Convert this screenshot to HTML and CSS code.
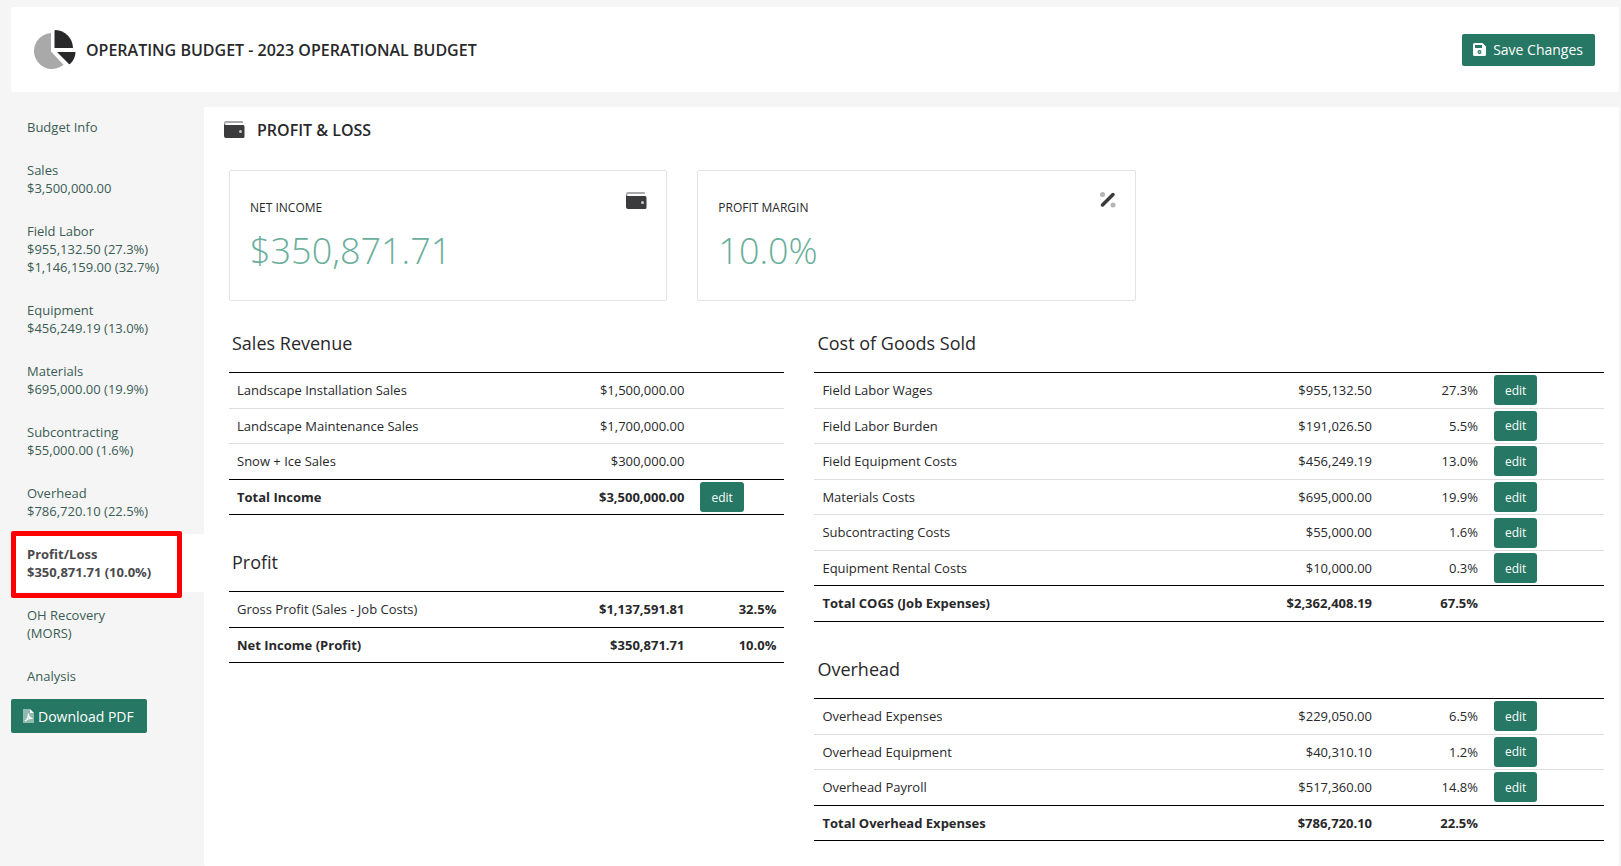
FILE: index.html
```
<!DOCTYPE html>
<html lang="en">
<head>
  <meta charset="UTF-8">
  <meta name="viewport" content="width=device-width, initial-scale=1.0">
  <title>Operating Budget - 2023 Operational Budget</title>
  <link rel="stylesheet" href="styles.css">
</head>
<body>

<!-- shared icons -->
<svg class="sprite" aria-hidden="true">
  <symbol id="wallet" viewBox="0 0 21 18">
    <path fill="#a9a9a9" d="M2 0h16a1 1 0 0 1 1 1v1H2.500A1.500 1.500 0 0 0 1 3.500L0 4V2a2 2 0 0 1 2-2z"/>
    <path fill="#3b3b3e" d="M0 3l1.500 1H19a1.500 1.500 0 0 1 1.500 1.500v10A1.500 1.500 0 0 1 19 17H2a2 2 0 0 1-2-2z"/>
    <circle cx="16.500" cy="10.500" r="1.500" fill="#c8c8c8"/>
  </symbol>
</svg>

<header class="page-header">
  <svg class="pie" width="42" height="40" viewBox="0 0 42 40" aria-hidden="true">
    <path fill="#a9a9a9" d="M17 3v18.500L29.500 34.800A18 18 0 1 1 17 3z"/>
    <path fill="#28282b" d="M21.500 0A18.500 18.500 0 0 1 39 18H20.500V1a1 1 0 0 1 1-1z"/>
    <path fill="#28282b" d="M23 22h18a1 1 0 0 1 .5 1 17 17 0 0 1-5.500 11 1 1 0 0 1-1 0z"/>
  </svg>
  <h1>OPERATING BUDGET - 2023 OPERATIONAL BUDGET</h1>
  <button class="btn btn-save" type="button">
    <svg width="13" height="13" viewBox="0 0 13 13" aria-hidden="true">
      <path fill="#fff" fill-rule="evenodd" d="M1.500 0H9.500L13 3.500v8A1.500 1.500 0 0 1 11.500 13h-10A1.500 1.500 0 0 1 0 11.500v-10A1.500 1.500 0 0 1 1.500 0zM2 2v3h7V2zM6.500 7a2 2 0 1 0 0 4 2 2 0 0 0 0-4z"/>
      <circle cx="6.500" cy="9" r="1" fill="#9cc5b9"/>
    </svg>
    Save Changes
  </button>
</header>

<div class="layout">
  <nav class="sidebar">
    <a href="#">Budget Info</a>
    <a href="#">Sales<br>$3,500,000.00</a>
    <a href="#">Field Labor<br>$955,132.50 (27.3%)<br>$1,146,159.00 (32.7%)</a>
    <a href="#">Equipment<br>$456,249.19 (13.0%)</a>
    <a href="#">Materials<br>$695,000.00 (19.9%)</a>
    <a href="#">Subcontracting<br>$55,000.00 (1.6%)</a>
    <a href="#">Overhead<br>$786,720.10 (22.5%)</a>
    <a href="#" class="active">Profit/Loss<br>$350,871.71 (10.0%)</a>
    <a href="#">OH Recovery<br>(MORS)</a>
    <a href="#">Analysis</a>
    <button class="btn btn-download" type="button">
      <svg width="11" height="14" viewBox="0 0 11 14" aria-hidden="true">
        <path fill="#8fbcae" d="M0 0h7v4h4v10H0z"/>
        <path fill="#fff" d="M7 0l4 4H7z"/>
        <path fill="none" stroke="#fff" stroke-width="1.200" d="M2 12c2-1 3.500-4 3.500-7.500C5.500 7.500 7 9.500 9.500 9.500 6.500 9 4 10 2 12"/>
      </svg>
      Download PDF
    </button>
  </nav>

  <main class="content">
    <h2 class="content-title">
      <svg width="21" height="18" aria-hidden="true"><use href="#wallet"/></svg>
      PROFIT &amp; LOSS
    </h2>

    <div class="grid">
      <div class="card">
        <div class="card-label">NET INCOME</div>
        <div class="card-value">$350,871.71</div>
        <svg class="card-icon" width="21" height="18" aria-hidden="true"><use href="#wallet"/></svg>
      </div>
      <div class="card">
        <div class="card-label">PROFIT MARGIN</div>
        <div class="card-value">10.0%</div>
        <svg class="card-icon" width="16" height="16" viewBox="0 0 16 16" aria-hidden="true">
          <circle cx="2.500" cy="2.500" r="2.500" fill="#b5b5b5"/>
          <circle cx="13" cy="13" r="2.500" fill="#b5b5b5"/>
          <path d="M2.500 13L13 2.500" stroke="#3b3b3e" stroke-width="3.500" stroke-linecap="round"/>
        </svg>
      </div>

      <div class="col-left">
        <section>
          <h3>Sales Revenue</h3>
          <table>
            <colgroup><col><col class="w-amount"><col class="w-side"></colgroup>
            <tbody>
              <tr><td>Landscape Installation Sales</td><td class="num">$1,500,000.00</td><td></td></tr>
              <tr><td>Landscape Maintenance Sales</td><td class="num">$1,700,000.00</td><td></td></tr>
              <tr><td>Snow + Ice Sales</td><td class="num">$300,000.00</td><td></td></tr>
              <tr class="total"><td>Total Income</td><td class="num">$3,500,000.00</td><td class="action"><button class="btn btn-edit" type="button">edit</button></td></tr>
            </tbody>
          </table>
        </section>
        <section>
          <h3>Profit</h3>
          <table>
            <colgroup><col><col class="w-amount"><col class="w-side"></colgroup>
            <tbody>
              <tr><td>Gross Profit (Sales - Job Costs)</td><td class="num strong">$1,137,591.81</td><td class="num strong">32.5%</td></tr>
              <tr class="total"><td>Net Income (Profit)</td><td class="num">$350,871.71</td><td class="num">10.0%</td></tr>
            </tbody>
          </table>
        </section>
      </div>

      <div class="col-right">
        <section>
          <h3>Cost of Goods Sold</h3>
          <table>
            <colgroup><col><col class="w-amount"><col class="w-percent"><col class="w-edit"></colgroup>
            <tbody>
              <tr><td>Field Labor Wages</td><td class="num">$955,132.50</td><td class="num">27.3%</td><td class="action"><button class="btn btn-edit" type="button">edit</button></td></tr>
              <tr><td>Field Labor Burden</td><td class="num">$191,026.50</td><td class="num">5.5%</td><td class="action"><button class="btn btn-edit" type="button">edit</button></td></tr>
              <tr><td>Field Equipment Costs</td><td class="num">$456,249.19</td><td class="num">13.0%</td><td class="action"><button class="btn btn-edit" type="button">edit</button></td></tr>
              <tr><td>Materials Costs</td><td class="num">$695,000.00</td><td class="num">19.9%</td><td class="action"><button class="btn btn-edit" type="button">edit</button></td></tr>
              <tr><td>Subcontracting Costs</td><td class="num">$55,000.00</td><td class="num">1.6%</td><td class="action"><button class="btn btn-edit" type="button">edit</button></td></tr>
              <tr><td>Equipment Rental Costs</td><td class="num">$10,000.00</td><td class="num">0.3%</td><td class="action"><button class="btn btn-edit" type="button">edit</button></td></tr>
              <tr class="total"><td>Total COGS (Job Expenses)</td><td class="num">$2,362,408.19</td><td class="num">67.5%</td><td></td></tr>
            </tbody>
          </table>
        </section>
        <section>
          <h3>Overhead</h3>
          <table>
            <colgroup><col><col class="w-amount"><col class="w-percent"><col class="w-edit"></colgroup>
            <tbody>
              <tr><td>Overhead Expenses</td><td class="num">$229,050.00</td><td class="num">6.5%</td><td class="action"><button class="btn btn-edit" type="button">edit</button></td></tr>
              <tr><td>Overhead Equipment</td><td class="num">$40,310.10</td><td class="num">1.2%</td><td class="action"><button class="btn btn-edit" type="button">edit</button></td></tr>
              <tr><td>Overhead Payroll</td><td class="num">$517,360.00</td><td class="num">14.8%</td><td class="action"><button class="btn btn-edit" type="button">edit</button></td></tr>
              <tr class="total"><td>Total Overhead Expenses</td><td class="num">$786,720.10</td><td class="num">22.5%</td><td></td></tr>
            </tbody>
          </table>
        </section>
      </div>
    </div>
  </main>
</div>

</body>
</html>
```
FILE: styles.css
```
* {
  box-sizing: border-box;
}
body {
  margin: 0;
  padding: 7px 2px 0 11px;
  min-height: 100vh;
  display: flex;
  flex-direction: column;
  background-color: #f5f5f5;
  color: #28282b;
  font-family: "Open Sans", "Noto Sans", sans-serif;
  font-size: 13px;
  line-height: 1.43;
}
h1, h2, h3 {
  margin: 0;
}
.sprite {
  display: none;
}

.page-header {
  display: flex;
  align-items: center;
  height: 85px;
  margin-bottom: 15px;
  padding: 0 24px 0 23px;
  background: white;
  border-radius: 2px;
}
.page-header h1 {
  flex: 1;
  margin-left: 10px;
  font-size: 16px;
  font-weight: 600;
  line-height: 24px;
}

.btn {
  background-color: #267763;
  color: white;
  border: none;
  border-radius: 2px;
  font-family: inherit;
  font-size: 14px;
  cursor: pointer;
}
.btn:hover {
  background-color: #1f6352;
}
.btn-save {
  display: flex;
  align-items: center;
  gap: 7px;
  height: 32px;
  padding: 0 12px 0 11px;
}
.btn-download {
  display: flex;
  align-items: center;
  align-self: flex-start;
  gap: 4px;
  height: 34px;
  padding: 0 13px 0 12px;
}
.btn-edit {
  display: block;
  height: 30px;
  padding: 0 11px;
  border-radius: 3px;
  font-size: 12px;
}

.layout {
  display: flex;
  flex: 1;
}

/* left menu */
.sidebar {
  display: flex;
  flex-direction: column;
  gap: 3px;
  width: 193px;
}
.sidebar a {
  position: relative;
  padding: 11px 16px;
  color: #3a5c54;
  line-height: 18px;
  text-decoration: none;
}
.sidebar a.active {
  background: white;
  color: #4a4a4d;
  font-weight: bold;
}
/* red highlight frame */
.sidebar a.active::after {
  content: "";
  position: absolute;
  top: -3px;
  bottom: -6px;
  left: 0;
  right: 22px;
  border: 5px solid #ff0000;
  border-radius: 2px;
}

.content {
  flex: 1;
  padding: 11px 15px 25px 25px;
  background: white;
  border-radius: 2px;
}
.content-title {
  display: flex;
  align-items: center;
  gap: 12px;
  margin: 0 0 28px -5px;
  font-size: 16px;
  font-weight: 600;
  line-height: 24px;
}

.grid {
  display: grid;
  grid-template-columns: repeat(12, 1fr);
  column-gap: 30px;
  row-gap: 29px;
}
.card {
  grid-column: span 4;
  position: relative;
  height: 131px;
  padding: 28px 20px;
  border: 1px solid #e3e3e3;
  border-radius: 2px;
}
.card-label {
  font-size: 12px;
}
.card-value {
  margin-top: 8px;
  color: #6aae9b;
  font-size: 36px;
  font-weight: 300;
  line-height: 54px;
}
.card-icon {
  position: absolute;
  top: 21px;
  right: 19px;
}

.col-left {
  grid-column: 1 / span 5;
}
.col-right {
  grid-column: span 7;
}
section {
  margin-bottom: 34px;
}
section:last-child {
  margin-bottom: 0;
}
section h3 {
  padding-left: 3px;
  margin-bottom: 16px;
  font-size: 18px;
  font-weight: 500;
  line-height: 26px;
}

table {
  width: 100%;
  border-collapse: collapse;
  table-layout: fixed;
  border-top: 1px solid #000;
  border-bottom: 1px solid #000;
}
td {
  padding: 8px;
  border-top: 1px solid #ddd;
}
tr:first-child td,
.total td {
  border-top: 1px solid #000;
}
.total,
.strong {
  font-weight: bold;
}
.num {
  text-align: right;
}
.action {
  padding: 2px 8px;
}
.w-amount {
  width: 24%;
}
.w-side {
  width: 92px;
}
.w-percent {
  width: 106px;
}
.w-edit {
  width: 118px;
}
```
